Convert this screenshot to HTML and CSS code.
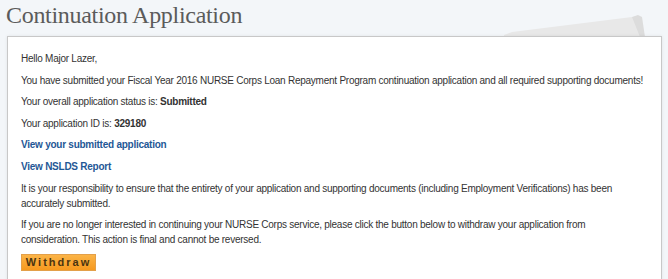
FILE: index.html
```html
<!DOCTYPE html>
<html lang="en">
<head>
    <meta charset="UTF-8">
    <meta name="viewport" content="width=device-width, initial-scale=1.0">
    <title>Continuation Application</title>
    <link rel="stylesheet" href="styles.css">
</head>
<body>
    <div id="page">
        <h1 class="page-title">Continuation Application</h1>
        <svg class="paper-curl" width="150" height="24" viewBox="0 0 150 24">
            <polygon points="0,22 8,19 128,4 136,5 140,24 0,24" fill="#e8e8e8" />
            <polygon points="128,4 134,2 138,4 141,24 136,24" fill="#dcdcdc" />
        </svg>
        <div class="panel">
            <p>Hello Major Lazer,</p>
            <p>You have submitted your Fiscal Year 2016 NURSE Corps Loan Repayment Program continuation application and all required supporting documents!</p>
            <p>Your overall application status is: <b>Submitted</b></p>
            <p>Your application ID is: <b>329180</b></p>
            <p><a href="#">View your submitted application</a></p>
            <p><a href="#">View NSLDS Report</a></p>
            <p>It is your responsibility to ensure that the entirety of your application and supporting documents (including Employment Verifications) has been accurately submitted.</p>
            <p>If you are no longer interested in continuing your NURSE Corps service, please click the button below to withdraw your application from<br>consideration. This action is final and cannot be reversed.</p>
            <button class="btn-withdraw">Withdraw</button>
        </div>
    </div>
</body>
</html>
```

FILE: styles.css
```css
body {
    margin: 0;
    background-color: #f3f6f9;
    font-family: "Liberation Sans", Arial, sans-serif;
    font-size: 10px;
    color: #333;
}
#page {
    position: relative;
    padding: 0 6px 0 7px;
}
.page-title {
    margin: 1px 0 0 -1px;
    height: 35px;
    font-family: "Liberation Serif", "Times New Roman", serif;
    font-weight: normal;
    font-size: 24px;
    line-height: 28px;
    letter-spacing: -0.3px;
    color: #5b5b5b;
}
.paper-curl {
    position: absolute;
    top: 12px;
    right: 14px;
}
.panel {
    position: relative;
    background-color: #fff;
    border: 1px solid #c8c8c8;
    box-shadow: 0 0 3px rgba(0, 0, 0, 0.08);
    padding: 14px 13px 11px 13px;
    height: 300px;
}
.panel p {
    margin: 0 0 6.6px 0;
    line-height: 15px;
    letter-spacing: -0.25px;
}
.panel a {
    color: #1f5896;
    font-weight: bold;
    text-decoration: none;
}
.btn-withdraw {
    display: block;
    width: 75px;
    height: 17px;
    padding: 0;
    font-family: "Liberation Sans", Arial, sans-serif;
    font-size: 11px;
    font-weight: bold;
    letter-spacing: 2px;
    color: #4a3410;
    background: linear-gradient(#fbb447, #f6991f);
    border: 1px solid #e3a04a;
    cursor: pointer;
}
```
